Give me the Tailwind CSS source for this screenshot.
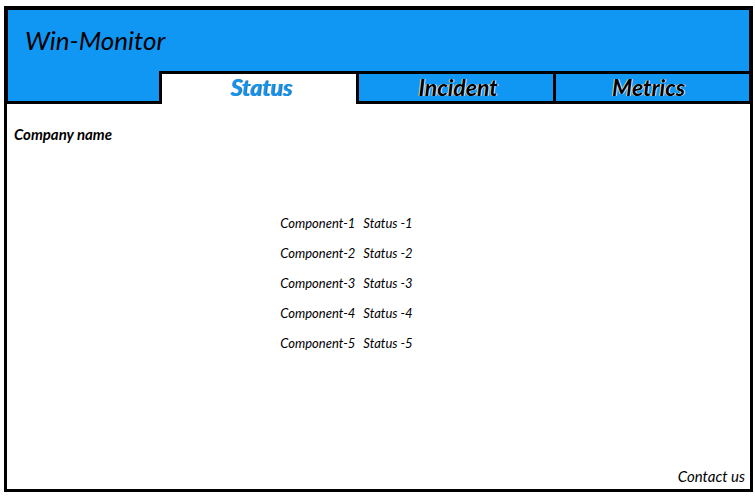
<!DOCTYPE html>
<html lang="en">
<head>
<meta charset="utf-8">
<meta name="viewport" content="width=device-width, initial-scale=1">
<title>Win-Monitor</title>
<script src="https://cdn.jsdelivr.net/npm/@tailwindcss/browser@4"></script>
</head>
<body class="flex min-h-screen flex-col bg-white pt-1.5 pr-0.5 pb-[5px] pl-1 font-['Lato','Carlito',sans-serif] text-black italic">
  <header class="border-x-4 border-t-4 border-black bg-[#1097f4]">
    <h1 class="px-[17px] pt-3.5 pb-[15px] text-[26px] leading-8">Win-Monitor</h1>
    <nav aria-label="Main" class="grid h-[33px] grid-cols-[154fr_194fr_200fr_193fr] text-[23px] leading-[26px] font-bold">
      <div class="border-r-3 border-b-3 border-black"></div>
      <a href="#status" aria-current="page" class="border-t-3 border-black bg-white pl-1 text-center text-[#1097f4] [text-shadow:1px_0_0_#5b6f86]">Status</a>
      <a href="#incident" class="border-3 border-black pl-1 text-center [text-shadow:-1px_0_0_#d8e4ee,1px_0_0_#d8e4ee]">Incident</a>
      <a href="#metrics" class="border-y-3 border-black pr-2 text-center [text-shadow:-1px_0_0_#d8e4ee,1px_0_0_#d8e4ee]">Metrics</a>
    </nav>
  </header>
  <main class="flex flex-1 flex-col border-x-3 border-b-3 border-black">
    <h2 class="px-[7px] pt-5 text-[15px] leading-5 font-bold">Company name</h2>
    <table class="mx-auto mt-16 mb-8 text-[13px] leading-[30px]">
      <tbody>
        <tr><td class="pr-2">Component-1</td><td class="pr-16">Status -1</td></tr>
        <tr><td class="pr-2">Component-2</td><td class="pr-16">Status -2</td></tr>
        <tr><td class="pr-2">Component-3</td><td class="pr-16">Status -3</td></tr>
        <tr><td class="pr-2">Component-4</td><td class="pr-16">Status -4</td></tr>
        <tr><td class="pr-2">Component-5</td><td class="pr-16">Status -5</td></tr>
      </tbody>
    </table>
    <a href="#contact" class="mt-auto self-end pr-[5px] pb-[3px] text-[15px] leading-5">Contact us</a>
  </main>
</body>
</html>
